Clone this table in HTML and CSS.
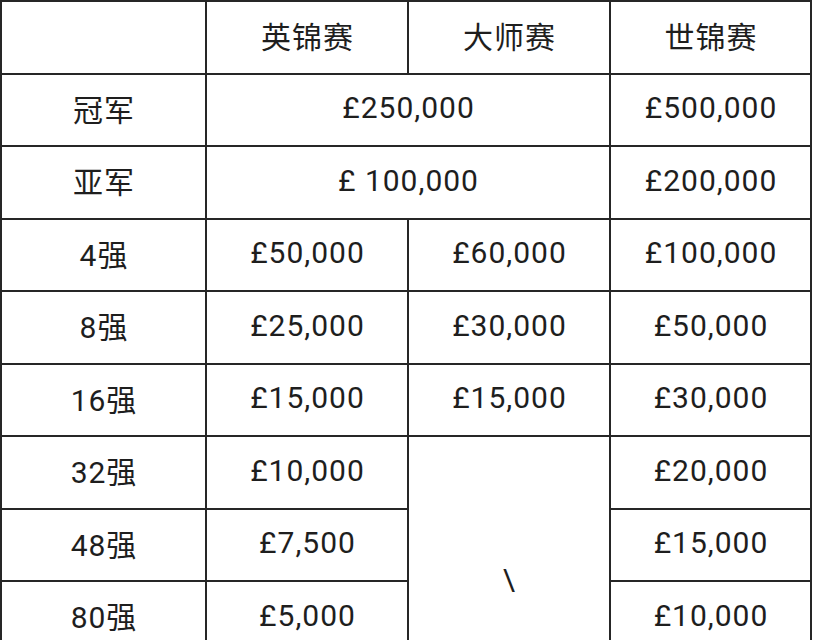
FILE: index.html
```html
<!DOCTYPE html>
<html lang="zh-CN">
<head>
<meta charset="utf-8">
<title>奖金表</title>
<link rel="stylesheet" href="styles.css">
</head>
<body>
<div class="page">
  <div class="prize-grid">
    <div class="cell"></div>
    <div class="cell">英锦赛</div>
    <div class="cell">大师赛</div>
    <div class="cell">世锦赛</div>

    <div class="cell">冠军</div>
    <div class="cell span2">£250,000</div>
    <div class="cell">£500,000</div>

    <div class="cell">亚军</div>
    <div class="cell span2">£ 100,000</div>
    <div class="cell">£200,000</div>

    <div class="cell">4强</div>
    <div class="cell">£50,000</div>
    <div class="cell">£60,000</div>
    <div class="cell">£100,000</div>

    <div class="cell">8强</div>
    <div class="cell">£25,000</div>
    <div class="cell">£30,000</div>
    <div class="cell">£50,000</div>

    <div class="cell">16强</div>
    <div class="cell">£15,000</div>
    <div class="cell">£15,000</div>
    <div class="cell">£30,000</div>

    <div class="cell">32强</div>
    <div class="cell">£10,000</div>
    <div class="cell rowspan4">\</div>
    <div class="cell">£20,000</div>

    <div class="cell">48强</div>
    <div class="cell">£7,500</div>
    <div class="cell">£15,000</div>

    <div class="cell">80强</div>
    <div class="cell">£5,000</div>
    <div class="cell">£10,000</div>

    <div class="cell"></div>
    <div class="cell"></div>
    <div class="cell"></div>
  </div>
</div>
</body>
</html>
```

FILE: styles.css
```css
html, body {
  margin: 0;
  padding: 0;
  background: #ffffff;
}

.page {
  width: 814px;
  height: 640px;
  overflow: hidden;
  background: #ffffff;
}

.prize-grid {
  display: grid;
  grid-template-columns: 205px 202px 202px 201px;
  grid-auto-rows: 72.5px;
  width: 812px;
  box-sizing: border-box;
  border-top: 2px solid #262626;
  border-left: 2px solid #262626;
  font-family: Roboto, "Noto Sans CJK SC", sans-serif;
  font-size: 30px;
  letter-spacing: 1px;
  color: #1e1e1e;
}

.cell {
  box-sizing: border-box;
  border-right: 2px solid #262626;
  border-bottom: 2px solid #262626;
  padding-bottom: 4px;
  padding-left: 1px;
  display: flex;
  align-items: center;
  justify-content: center;
  white-space: nowrap;
}

.span2 {
  grid-column: span 2;
}

.rowspan4 {
  grid-row: span 4;
}
```
